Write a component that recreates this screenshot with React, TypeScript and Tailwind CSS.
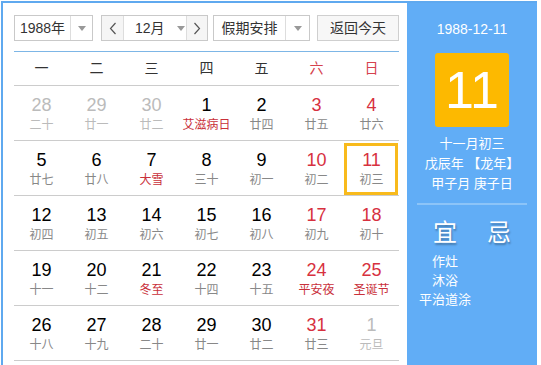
import React from "react";

type Day = { d: number; lunar: string; other?: boolean; fest?: boolean };

const rows: Day[][] = [
  [
    { d: 28, lunar: "二十", other: true },
    { d: 29, lunar: "廿一", other: true },
    { d: 30, lunar: "廿二", other: true },
    { d: 1, lunar: "艾滋病日", fest: true },
    { d: 2, lunar: "廿四" },
    { d: 3, lunar: "廿五" },
    { d: 4, lunar: "廿六" },
  ],
  [
    { d: 5, lunar: "廿七" },
    { d: 6, lunar: "廿八" },
    { d: 7, lunar: "大雪", fest: true },
    { d: 8, lunar: "三十" },
    { d: 9, lunar: "初一" },
    { d: 10, lunar: "初二" },
    { d: 11, lunar: "初三" },
  ],
  [
    { d: 12, lunar: "初四" },
    { d: 13, lunar: "初五" },
    { d: 14, lunar: "初六" },
    { d: 15, lunar: "初七" },
    { d: 16, lunar: "初八" },
    { d: 17, lunar: "初九" },
    { d: 18, lunar: "初十" },
  ],
  [
    { d: 19, lunar: "十一" },
    { d: 20, lunar: "十二" },
    { d: 21, lunar: "冬至", fest: true },
    { d: 22, lunar: "十四" },
    { d: 23, lunar: "十五" },
    { d: 24, lunar: "平安夜", fest: true },
    { d: 25, lunar: "圣诞节", fest: true },
  ],
  [
    { d: 26, lunar: "十八" },
    { d: 27, lunar: "十九" },
    { d: 28, lunar: "二十" },
    { d: 29, lunar: "廿一" },
    { d: 30, lunar: "廿二" },
    { d: 31, lunar: "廿三" },
    { d: 1, lunar: "元旦", other: true },
  ],
];

const weekdays = ["一", "二", "三", "四", "五", "六", "日"];

const Caret = () => (
  <span className="inline-block w-0 h-0 border-x-[4px] border-x-transparent border-t-[5px] border-t-[#999]" />
);

const Chevron = ({ dir }: { dir: "l" | "r" }) => (
  <svg width="8" height="13" viewBox="0 0 8 13" fill="none" stroke="#555" strokeWidth="1.2">
    {dir === "l" ? <polyline points="6.5,1 1.5,6.5 6.5,12" /> : <polyline points="1.5,1 6.5,6.5 1.5,12" />}
  </svg>
);

export default function App() {
  return (
    <div className="pt-[1px] pl-[1px] bg-white h-[365px] overflow-hidden font-['Liberation_Sans','Noto_Sans_CJK_SC',sans-serif]">
      <div className="w-[536px] h-[400px] flex border-2 border-[#5fa9ef]">
        {/* calendar side */}
        <div className="w-[407px] pl-[11px] pr-[8px] pt-[12px]">
          <div className="flex items-center h-[26px] text-[14px] text-[#333]">
            <div className="w-[79px] h-full flex border border-[#c9c9c9]">
              <span className="w-[55px] flex items-center justify-center">1988年</span>
              <span className="flex-1 flex items-center justify-center border-l border-[#ddd]">
                <Caret />
              </span>
            </div>
            <div className="ml-[8px] w-[107px] h-full flex border border-[#c9c9c9]">
              <span className="w-[22px] flex items-center justify-center bg-[#f5f5f5] border-r border-[#ddd]">
                <Chevron dir="l" />
              </span>
              <span className="w-[62px] flex items-center pl-[11px] gap-[12px]">
                12月
                <Caret />
              </span>
              <span className="flex-1 flex items-center justify-center bg-[#f5f5f5] border-l border-[#ddd]">
                <Chevron dir="r" />
              </span>
            </div>
            <div className="ml-[5px] w-[97px] h-full flex border border-[#c9c9c9]">
              <span className="w-[71px] flex items-center justify-center">假期安排</span>
              <span className="flex-1 flex items-center justify-center border-l border-[#ddd]">
                <Caret />
              </span>
            </div>
            <button className="ml-[7px] w-[82px] h-full border border-[#cfcfcf] bg-[#f7f7f7] text-[14px] text-[#333]">
              返回今天
            </button>
          </div>

          <div className="mt-[10px] w-[385px] border-t border-[#7db6e6]">
            <div className="grid grid-cols-7 h-[34px] border-b border-[#ccc] text-[14px]">
              {weekdays.map((w, i) => (
                <div
                  key={w}
                  className={`flex items-center justify-center ${i >= 5 ? "text-[#d5424e]" : "text-[#333]"}`}
                >
                  {w}
                </div>
              ))}
            </div>
            {rows.map((row, ri) => (
              <div key={ri} className="grid grid-cols-7 h-[55px] border-b border-[#ccc]">
                {row.map((c, ci) => {
                  const weekend = ci >= 5;
                  const selected = ri === 1 && ci === 6;
                  const numColor = c.other ? "text-[#bbb]" : weekend ? "text-[#d7313f]" : "text-black";
                  const lunColor = c.other ? "text-[#bbb]" : c.fest ? "text-[#c9303a]" : "text-[#888]";
                  return (
                    <div key={ci} className="relative flex flex-col items-center pt-[9px]">
                      <span className={`text-[18px] leading-[20px] ${numColor}`}>{c.d}</span>
                      <span className={`text-[12px] leading-[20px] ${lunColor}`}>{c.lunar}</span>
                      {selected && (
                        <span className="absolute left-0 right-[1px] top-[2px] bottom-[0px] border-[3px] border-[#f8ba1c]" />
                      )}
                    </div>
                  );
                })}
              </div>
            ))}
          </div>
        </div>

        {/* info side */}
        <div className="flex-1 bg-[#61adf6] text-white flex flex-col items-center pt-[16px]">
          <div className="text-[14px] leading-[20px]">1988-12-11</div>
          <div className="mt-[14px] w-[74px] h-[74px] rounded-[3px] bg-[#fdb900] flex items-center justify-center text-[52px] leading-none">
            11
          </div>
          <div className="mt-[7px] text-[13px] leading-[20px] text-center">
            <div>十一月初三</div>
            <div>戊辰年 【龙年】</div>
            <div>甲子月 庚子日</div>
          </div>
          <div className="mt-[9px] w-[110px] h-[2px] bg-[#8cc4f8]" />
          <div className="mt-[13px] w-full px-[11px] grid grid-cols-[54px_54px]">
            <div className="flex flex-col items-center">
              <span className="text-[24px] leading-[30px] [text-shadow:1px_2px_2px_rgba(0,0,0,0.3)]">宜</span>
              <div className="mt-[4px] text-[13px] leading-[19px] text-center">
                <div>作灶</div>
                <div>沐浴</div>
                <div>平治道涂</div>
              </div>
            </div>
            <div className="flex flex-col items-center">
              <span className="text-[24px] leading-[30px] [text-shadow:1px_2px_2px_rgba(0,0,0,0.3)]">忌</span>
            </div>
          </div>
        </div>
      </div>
    </div>
  );
}
